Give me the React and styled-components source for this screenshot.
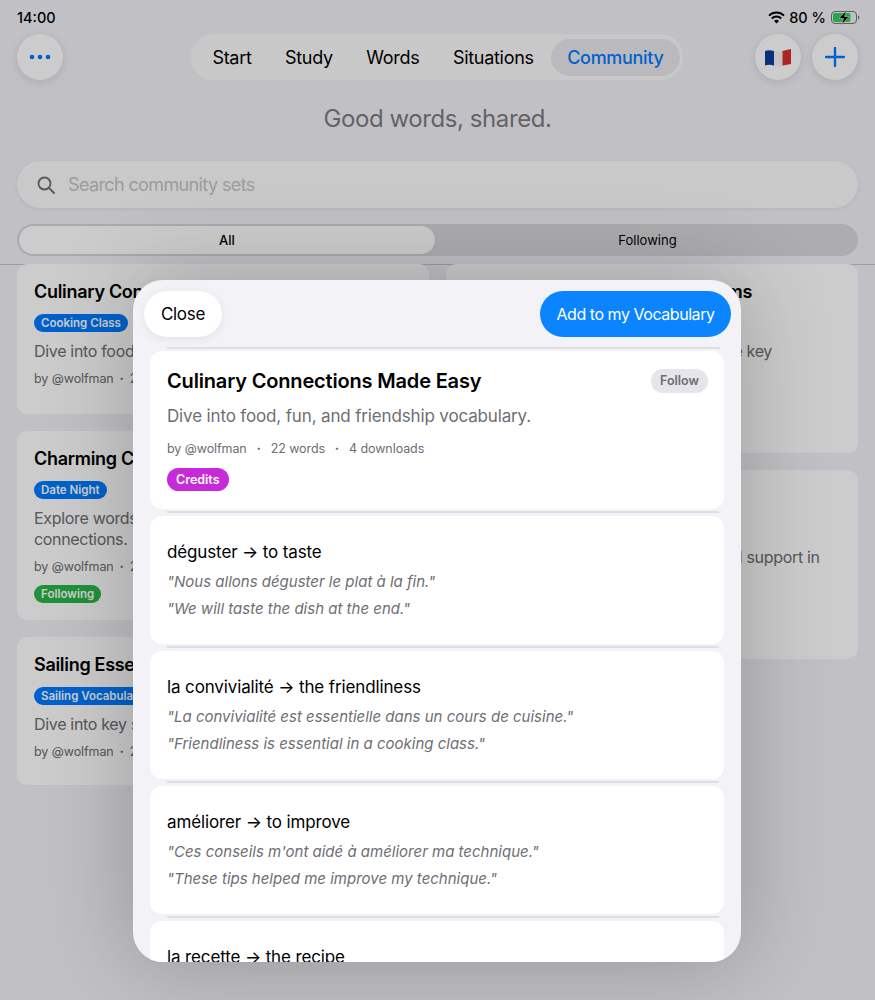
import React from "react";
import styled, { createGlobalStyle } from "styled-components";

const GlobalStyle = createGlobalStyle`
  html, body {
    margin: 0;
    height: 1000px;
    overflow: hidden;
    background: #f2f2f7;
    font-family: Inter, "Liberation Sans", sans-serif;
    -webkit-font-smoothing: antialiased;
  }
  * { box-sizing: border-box; }
`;

const Page = styled.div`
  position: relative;
  width: 875px;
  height: 1000px;
  overflow: hidden;
  background: #f2f2f7;
  color: #000;
`;

const StatusBar = styled.div`
  display: flex;
  justify-content: space-between;
  align-items: center;
  height: 34px;
  padding: 0 15px 0 17px;
  font-size: 14.5px;
  font-weight: 450;
`;

const StatusRight = styled.div`
  display: flex;
  align-items: center;
  gap: 5px;
  svg:first-child { margin-right: -1px; }
`;

const TopBar = styled.div`
  display: grid;
  grid-template-columns: 1fr auto 1fr;
  align-items: center;
  padding: 0 18px 0 17px;
`;

const RoundButton = styled.button`
  display: flex;
  align-items: center;
  justify-content: center;
  width: 46px;
  height: 46px;
  padding: 0;
  border: 0;
  border-radius: 50%;
  background: #fff;
  box-shadow: 0 2px 10px rgba(0, 0, 0, 0.12);
`;

const TopRight = styled.div`
  display: flex;
  justify-content: flex-end;
  gap: 11px;
  margin-right: -1px;
`;

const NavPill = styled.nav`
  display: flex;
  align-items: center;
  gap: 1.5px;
  height: 46px;
  padding: 0 3px 0 5px;
  border-radius: 23px;
  background: #fbfbfc;
`;

const NavItem = styled.span`
  display: flex;
  align-items: center;
  height: 37px;
  padding: 0 16px;
  border-radius: 19px;
  font-size: 18px;
  font-weight: ${p => (p.$active ? 550 : 430)};
  letter-spacing: -0.3px;
  color: ${p => (p.$active ? "#007aff" : "#000")};
  background: ${p => (p.$active ? "#e9e9ee" : "transparent")};
`;

const Tagline = styled.h1`
  margin: 22px 0 0;
  height: 34px;
  font-size: 24px;
  line-height: 34px;
  font-weight: 420;
  letter-spacing: -0.42px;
  text-align: center;
  color: #7c7c80;
`;

const SearchBox = styled.div`
  display: flex;
  align-items: center;
  gap: 13px;
  height: 47px;
  margin: 25px 17px 0;
  padding: 0 20px;
  border-radius: 24px;
  background: #fcfcfc;
  box-shadow: 0 1px 4px rgba(0, 0, 0, 0.08);
  font-size: 18px;
  letter-spacing: -0.62px;
  color: #c3c3c6;
  svg { color: #6e6e73; }
`;

const Segments = styled.div`
  display: grid;
  grid-template-columns: 416px 1fr;
  height: 32px;
  margin: 16px 17px 0;
  padding: 2px;
  border-radius: 16px;
  background: #d9d9dd;
`;

const Segment = styled.div`
  display: flex;
  align-items: center;
  justify-content: center;
  padding-left: ${p => (p.$active ? 0 : 4)}px;
  border-radius: 14px;
  font-size: 13px;
  font-weight: ${p => (p.$active ? 500 : 400)};
  background: ${p => (p.$active ? "#fff" : "transparent")};
  box-shadow: ${p => (p.$active ? "0 0 2px rgba(0,0,0,.1)" : "none")};
`;

const Divider = styled.div`
  height: 1px;
  margin-top: 8px;
  background: #c6c6c8;
`;

const SetGrid = styled.div`
  display: grid;
  grid-template-columns: 412px 412px;
  gap: 17px;
  padding: 0 17px;
  align-items: start;
  margin-top: -1px;
`;

const SetColumn = styled.div`
  display: flex;
  flex-direction: column;
  gap: 17px;
`;

const SetCard = styled.article`
  padding: 17px 17px 0;
  height: ${p => p.$height}px;
  border-radius: 10px;
  background: #fff;
`;

const SetTitle = styled.h3`
  margin: 0;
  font-size: 18px;
  line-height: 22px;
  font-weight: 600;
  letter-spacing: -0.3px;
  white-space: nowrap;
`;

const Badge = styled.span`
  display: inline-block;
  height: 18px;
  margin-top: ${p => p.$top}px;
  padding: 0 7px;
  border-radius: 9px;
  font-size: 11.5px;
  line-height: 18px;
  font-weight: 600;
  color: #fff;
  background: ${p => p.$color};
  white-space: nowrap;
`;

const BadgeRow = styled.div`
  display: flex;
  height: 29px;
`;

const SetText = styled.p`
  margin: 9px 0 0;
  font-size: 16px;
  line-height: 21px;
  letter-spacing: -0.32px;
  color: #6e6e73;
`;

const SetMeta = styled.div`
  display: flex;
  gap: 4px;
  margin-top: 8px;
  font-size: 12.5px;
  line-height: 18px;
  letter-spacing: -0.08px;
  color: #6e6e73;
  white-space: nowrap;
`;

const MetaDot = styled.span`
  width: 8px;
  font-weight: 800;
  text-align: center;
`;

const Backdrop = styled.div`
  position: absolute;
  inset: 0;
  background: rgba(0, 0, 0, 0.2);
`;

const Modal = styled.section`
  position: absolute;
  left: 133px;
  top: 280px;
  width: 608px;
  height: 682px;
  overflow: hidden;
  border-radius: 30px;
  background: #f2f2f7;
  box-shadow: 0 0 90px rgba(0, 0, 0, 0.24);
`;

const ModalHead = styled.header`
  display: flex;
  justify-content: space-between;
  align-items: center;
  height: 67px;
  margin: 0 10px 0 11px;
`;

const CloseButton = styled.button`
  width: 78px;
  height: 46px;
  border: 0;
  border-radius: 23px;
  background: #fff;
  box-shadow: 0 2px 10px rgba(0, 0, 0, 0.07);
  font: 400 17px Inter, sans-serif;
  letter-spacing: -0.3px;
  color: #000;
`;

const AddButton = styled.button`
  width: 191px;
  height: 46px;
  border: 0;
  border-radius: 23px;
  background: #0a84ff;
  font: 400 16px Inter, sans-serif;
  letter-spacing: -0.45px;
  color: #fff;
`;

const ModalRule = styled.div`
  height: 2px;
  margin: ${p => (p.$between ? "2px 5px 3px 17px" : "0 21px 2px 34px")};
  background: #dedee6;
`;

const ModalList = styled.div`
  padding: 0 17px;
  display: flex;
  flex-direction: column;
`;

const HeroCard = styled.div`
  position: relative;
  height: 158px;
  padding: 17px 17px 0;
  border-radius: 12px;
  background: #fff;
`;

const HeroTitle = styled.h2`
  margin: 0;
  font-size: 20px;
  line-height: 26px;
  font-weight: 600;
  letter-spacing: -0.17px;
`;

const FollowChip = styled.span`
  position: absolute;
  top: 18px;
  right: 16px;
  width: 57px;
  height: 24px;
  border-radius: 12px;
  background: #e5e5ea;
  font-size: 12.5px;
  line-height: 24px;
  font-weight: 600;
  text-align: center;
  color: #6e6e73;
`;

const HeroText = styled.p`
  margin: 10px 0 0;
  font-size: 17px;
  line-height: 24px;
  letter-spacing: -0.15px;
  color: #6e6e73;
`;

const HeroMeta = styled.div`
  display: flex;
  gap: 8px;
  margin-top: 12px;
  font-size: 12.5px;
  line-height: 18px;
  letter-spacing: -0.08px;
  color: #6e6e73;
`;

const CreditsBadge = styled.span`
  display: inline-block;
  height: 23px;
  margin-top: 10px;
  padding: 0 9px;
  border-radius: 12px;
  background: #c72ad8;
  font-size: 12.5px;
  line-height: 23px;
  font-weight: 600;
  color: #fff;
`;

const WordCard = styled.div`
  height: 128px;
  padding: 25px 17px 0;
  border-radius: 12px;
  background: #fff;
`;

const WordLine = styled.div`
  font-size: 17px;
  line-height: 22px;
  letter-spacing: -0.13px;
`;

const Example = styled.div`
  margin-top: ${p => p.$top}px;
  font-size: 15px;
  line-height: 20px;
  font-style: italic;
  color: #6e6e73;
`;

const WifiIcon = () => (
  <svg width="17" height="13" viewBox="0 0 17 13" fill="none" stroke="#000" strokeWidth="2">
    <path d="M1 4.600a10.600 10.600 0 0 1 15 0" />
    <path d="M3.800 7.500a6.600 6.600 0 0 1 9.400 0" />
    <path d="M8.500 12.600 6 10.100a3.500 3.500 0 0 1 5 0z" fill="#000" stroke="none" />
  </svg>
);

const BatteryIcon = () => (
  <svg width="29" height="15" viewBox="0 0 29 15">
    <rect x="0.5" y="1.500" width="25" height="12" rx="3.500" fill="none" stroke="#77777a" />
    <rect x="2" y="3" width="17.500" height="9" rx="2" fill="#34d058" />
    <path d="M27 5.500v4c.9-.3 1.400-1 1.400-2s-.5-1.700-1.400-2z" fill="#77777a" />
    <path d="M15.500 0 8 8.500h4.500L10.500 15 18 6.500h-4.500z" fill="#000" stroke="#dcdce0" strokeWidth="0.7" />
  </svg>
);

const DotsIcon = () => (
  <svg width="24" height="6" viewBox="0 0 24 6" fill="#007aff">
    <circle cx="4" cy="3" r="2.300" />
    <circle cx="12" cy="3" r="2.300" />
    <circle cx="20" cy="3" r="2.300" />
  </svg>
);

const PlusIcon = () => (
  <svg width="20" height="20" viewBox="0 0 20 20" stroke="#007aff" strokeWidth="2.400" strokeLinecap="round">
    <path d="M10 1v18M1 10h18" />
  </svg>
);

const FlagIcon = () => (
  <svg width="26" height="19" viewBox="0 0 26 19">
    <path d="M0 3c3-1 6-.8 9 0v14.500c-3-.8-6-1-9 0z" fill="#0a3f96" />
    <path d="M9 3c3 .8 5.500 .6 8.500 0v14.500c-3 .6-5.500 .8-8.500 0z" fill="#f4f4f6" />
    <path d="M17.500 3c3-.6 5.500-1.400 8.500-2v15c-3 .4-5.500.9-8.500 1.500z" fill="#d6302b" />
  </svg>
);

const SearchIcon = () => (
  <svg width="18" height="18" viewBox="0 0 18 18" fill="none" stroke="currentColor" strokeWidth="1.800" strokeLinecap="round">
    <circle cx="7.500" cy="7.500" r="6" />
    <path d="m12 12 5 5" />
  </svg>
);

const NAV_ITEMS = ["Start", "Study", "Words", "Situations", "Community"];

const LEFT_SETS = [
  {
    title: "Culinary Connections Made Easy",
    badge: "Cooking Class",
    text: "Dive into food, fun, and friendship vocabulary.",
    height: 150
  },
  {
    title: "Charming Conversations for Two",
    badge: "Date Night",
    text: "Explore words for romance, dining out, and lasting connections.",
    following: true,
    height: 189
  },
  {
    title: "Sailing Essentials on the Water",
    badge: "Sailing Vocabulary",
    text: "Dive into key sailing terms for your next trip.",
    height: 148
  }
];

const RIGHT_SETS = [
  {
    title: "Office Phrases and Popular Idioms",
    text: "Learn useful expressions to review the key",
    height: 189
  },
  {
    title: "Helping Hands",
    text: "Terms and phrases to extend care and support in",
    height: 189
  }
];

const WORDS = [
  {
    term: "déguster → to taste",
    fr: "\"Nous allons déguster le plat à la fin.\"",
    en: "\"We will taste the dish at the end.\""
  },
  {
    term: "la convivialité → the friendliness",
    fr: "\"La convivialité est essentielle dans un cours de cuisine.\"",
    en: "\"Friendliness is essential in a cooking class.\""
  },
  {
    term: "améliorer → to improve",
    fr: "\"Ces conseils m'ont aidé à améliorer ma technique.\"",
    en: "\"These tips helped me improve my technique.\""
  },
  {
    term: "la recette → the recipe",
    fr: "\"Voici la recette de ma grand-mère.\"",
    en: "\"Here is my grandmother's recipe.\""
  }
];

const CommunitySet = ({ set }) => (
  <SetCard $height={set.height}>
    <SetTitle>{set.title}</SetTitle>
    <BadgeRow>
      {set.badge && <Badge $color="#007aff" $top={11}>{set.badge}</Badge>}
    </BadgeRow>
    <SetText>{set.text}</SetText>
    <SetMeta>
      <span>by @wolfman</span>
      <MetaDot>·</MetaDot>
      <span>22 words</span>
      <MetaDot>·</MetaDot>
      <span>4 downloads</span>
    </SetMeta>
    {set.following && <Badge $color="#28b648" $top={9}>Following</Badge>}
  </SetCard>
);

const App = () => (
  <Page>
    <GlobalStyle />
    <StatusBar>
      <span>14:00</span>
      <StatusRight>
        <WifiIcon />
        <span>80 %</span>
        <BatteryIcon />
      </StatusRight>
    </StatusBar>
    <TopBar>
      <div>
        <RoundButton><DotsIcon /></RoundButton>
      </div>
      <NavPill>
        {NAV_ITEMS.map(item => (
          <NavItem key={item} $active={item === "Community"}>{item}</NavItem>
        ))}
      </NavPill>
      <TopRight>
        <RoundButton><FlagIcon /></RoundButton>
        <RoundButton><PlusIcon /></RoundButton>
      </TopRight>
    </TopBar>
    <Tagline>Good words, shared.</Tagline>
    <SearchBox>
      <SearchIcon />
      <span>Search community sets</span>
    </SearchBox>
    <Segments>
      <Segment $active>All</Segment>
      <Segment>Following</Segment>
    </Segments>
    <Divider />
    <SetGrid>
      <SetColumn>
        {LEFT_SETS.map(set => <CommunitySet key={set.title} set={set} />)}
      </SetColumn>
      <SetColumn>
        {RIGHT_SETS.map(set => <CommunitySet key={set.title} set={set} />)}
      </SetColumn>
    </SetGrid>
    <Backdrop />
    <Modal>
      <ModalHead>
        <CloseButton>Close</CloseButton>
        <AddButton>Add to my Vocabulary</AddButton>
      </ModalHead>
      <ModalRule />
      <ModalList>
        <HeroCard>
          <HeroTitle>Culinary Connections Made Easy</HeroTitle>
          <FollowChip>Follow</FollowChip>
          <HeroText>Dive into food, fun, and friendship vocabulary.</HeroText>
          <HeroMeta>
            <span>by @wolfman</span>
            <MetaDot>·</MetaDot>
            <span>22 words</span>
            <MetaDot>·</MetaDot>
            <span>4 downloads</span>
          </HeroMeta>
          <CreditsBadge>Credits</CreditsBadge>
        </HeroCard>
        {WORDS.map(word => (
          <React.Fragment key={word.term}>
            <ModalRule $between />
            <WordCard>
              <WordLine>{word.term}</WordLine>
              <Example $top={9}>{word.fr}</Example>
              <Example $top={7}>{word.en}</Example>
            </WordCard>
          </React.Fragment>
        ))}
      </ModalList>
    </Modal>
  </Page>
);

export default App;
